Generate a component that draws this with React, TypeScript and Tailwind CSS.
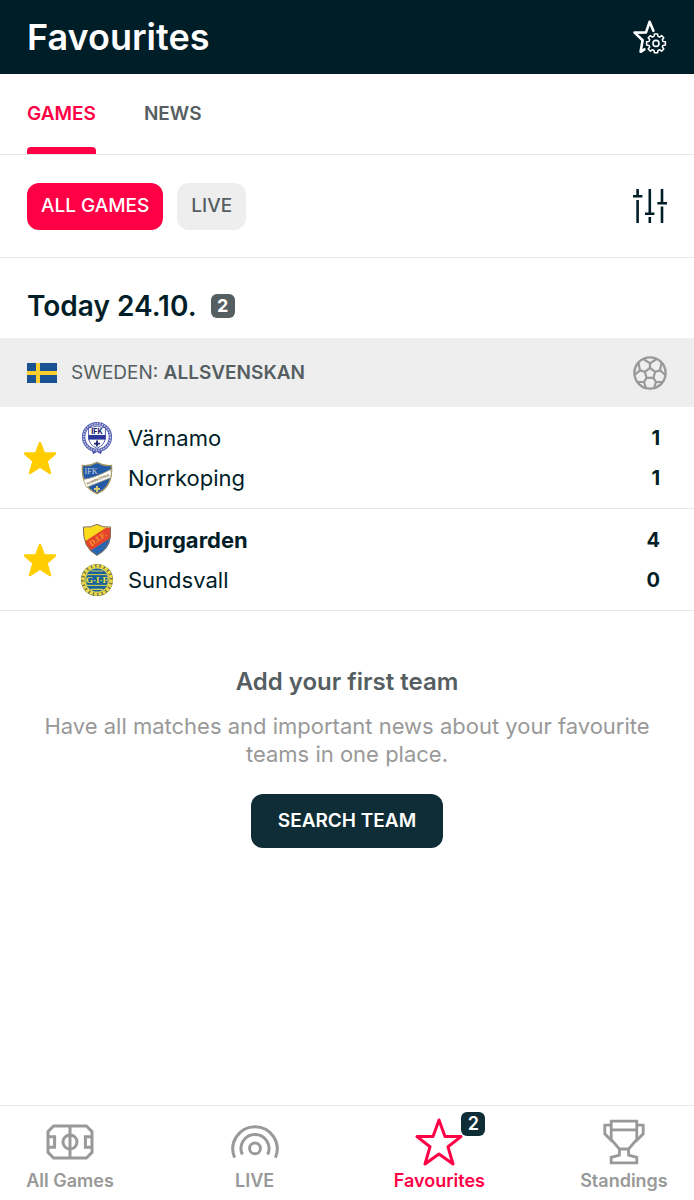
import React, { useState } from 'react';

interface ITeam {
    name: string;
    score: number;
    crest: React.ReactNode;
    winner?: boolean;
}

interface IMatch {
    id: number;
    teams: ITeam[];
}

const STAR_POINTS = '17,2 21,12.5 32,12.5 23.5,20 27,32 17,25.4 7,32 10.5,20 2,12.5 13,12.5';

const FavouriteSettingsIcon = () => (
    <svg width="34" height="34" viewBox="0 0 34 34" fill="none" stroke="currentColor" strokeLinejoin="round" strokeLinecap="round">
        <path d="M20.4 10.8 L16.6 1.8 L13 12.4 L1.6 12.6 L9.6 20.2 L7.6 31.8 L11.4 29.4" strokeWidth="2.6" />
        <circle cx="23" cy="23.4" r="3" strokeWidth="1.6" />
        <path
            d="M21.4 14 H24.6 L25 16.4 L26.6 17.1 L28.6 15.6 L30.8 17.8 L29.3 19.8 L30 21.4 L32.4 21.8 V25 L30 25.4 L29.3 27 L30.8 29 L28.6 31.2 L26.6 29.7 L25 30.4 L24.6 32.8 H21.4 L21 30.4 L19.4 29.7 L17.4 31.2 L15.2 29 L16.7 27 L16 25.4 L13.6 25 V21.8 L16 21.4 L16.7 19.8 L15.2 17.8 L17.4 15.6 L19.4 17.1 L21 16.4 Z"
            strokeWidth="1.5"
        />
    </svg>
);

const FilterIcon = () => (
    <svg width="34" height="34" viewBox="0 0 34 34" stroke="currentColor" strokeWidth="2.6">
        <path d="M4.6 0 V7.3 M0 7.3 H9.4 M4.6 11 V34" />
        <path d="M16.8 0 V24.7 M12 24.7 H21.4 M16.8 28 V34" />
        <path d="M29 0 V14.3 M24.4 14.3 H34 M29 17.6 V34" />
    </svg>
);

const BallIcon = () => (
    <svg width="34" height="34" viewBox="0 0 34 34" fill="none" stroke="currentColor" strokeWidth="2.2" strokeLinejoin="round">
        <circle cx="17" cy="17" r="15.6" strokeWidth="2.4" />
        <path d="M17 12 L22.2 15.8 L20.4 21.8 H13.6 L11.8 15.8 Z" />
        <path d="M17 12 V7.4 M22.2 15.8 L27 14.4 M20.4 21.8 L23 26 M13.6 21.8 L11 26 M11.8 15.8 L7 14.4" />
        <path d="M10.4 3 L17 7.4 L23.6 3 M28.6 6.6 L27 14.4 L32.4 19 M29.6 26 H23 L21 32 M4.4 26 H11 L13 32 M5.4 6.6 L7 14.4 L1.6 19" />
    </svg>
);

const SwedenFlag = () => (
    <svg width="30" height="20" viewBox="0 0 30 20">
        <rect width="30" height="20" fill="#1a5293" />
        <path d="M11 0 V20 M0 10 H30" stroke="#fccf2e" strokeWidth="4" />
    </svg>
);

const VarnamoCrest = () => (
    <svg width="34" height="34" viewBox="0 0 34 34">
        <path d="M12 29 L13 33 L17 31 L21 33 L22 29 Z" fill="#3b45a0" />
        <circle cx="17" cy="16" r="13.4" fill="#fff" stroke="#5660b2" strokeWidth="3.4" />
        <circle cx="17" cy="16" r="13.4" fill="none" stroke="#c9cdea" strokeWidth="1.6" strokeDasharray="1.4 1.2" />
        <path d="M8.6 6.6 Q13 6.6 17 5 Q21 6.6 25.4 6.6 V17 Q25 23.6 17 27.4 Q9 23.6 8.6 17 Z" fill="#fff" stroke="#2c3899" strokeWidth="0.8" />
        <rect x="8.4" y="14" width="17.2" height="4.6" fill="#2c3899" />
        <text x="17" y="12.8" textAnchor="middle" fontSize="7" fontWeight="800" fontFamily="Inter, sans-serif" fill="#1c2471">IFK</text>
        <path d="M17 19.6 V25.6 M14 22.6 H20" stroke="#1c2471" strokeWidth="1.8" />
    </svg>
);

const NorrkopingCrest = () => (
    <svg width="34" height="34" viewBox="0 0 34 34">
        <path d="M2.5 4.5 Q10 5.4 17 1.4 Q24 5.4 31.5 4.5 Q33 26 17 32.6 Q1 26 2.5 4.5 Z" fill="#2459a6" stroke="#a29362" strokeWidth="1.4" />
        <path d="M3.6 18.4 Q13 17.6 31 8.4 Q31.6 12 30.6 16.6 Q21 20.6 6.6 26.2 Q4.4 22.4 3.6 18.4 Z" fill="#fff" stroke="#b5a97c" strokeWidth="0.8" />
        <text x="11" y="13.4" textAnchor="middle" fontSize="8" fontFamily="Liberation Serif, serif" fill="#ccd3dc">IFK</text>
        <text x="18" y="19.6" textAnchor="middle" fontSize="3.6" fontWeight="700" fontFamily="Inter, sans-serif" fill="#8e8254" transform="rotate(-22 18 18)">NORRKÖPING</text>
        <path d="M17 25 V31 M14 28 H20" stroke="#d8c973" strokeWidth="2" />
    </svg>
);

const DjurgardenCrest = () => (
    <svg width="34" height="34" viewBox="0 0 34 34">
        <path d="M3.4 4 Q10.4 5 17 1.4 Q23.6 5 30.6 4 Q31.6 25 17 32.4 Q2.4 25 3.4 4 Z" fill="#fbdc1b" />
        <path d="M30.8 14 Q29.8 26 17 32.4 Q13.4 30.4 10.4 27.2 Z" fill="#2866b1" />
        <path d="M30.4 5 Q31.2 10 30.6 15 L10.6 27.4 Q6.4 23.6 4.8 18.6 L26 4.8 Z" fill="#e5432c" />
        <text x="18" y="18.4" textAnchor="middle" fontSize="8" fontWeight="700" fontFamily="Liberation Serif, serif" fill="#efa02c" transform="rotate(-35 18 16)">D.I.F.</text>
        <path d="M3.4 4 Q10.4 5 17 1.4 Q23.6 5 30.6 4 Q31.6 25 17 32.4 Q2.4 25 3.4 4 Z" fill="none" stroke="#806c5c" strokeWidth="1" />
    </svg>
);

const SundsvallCrest = () => (
    <svg width="34" height="34" viewBox="0 0 34 34">
        <circle cx="17" cy="17" r="14.4" fill="#e9dc60" stroke="#6f7849" strokeWidth="3.4" />
        <circle cx="17" cy="17" r="14.2" fill="none" stroke="#efd946" strokeWidth="3.2" strokeDasharray="3 1.4" />
        <circle cx="17" cy="17" r="11.6" fill="#19639b" />
        <path d="M11 8 H23 M11 26.4 H23" stroke="#d8d45c" strokeWidth="1.2" />
        <rect x="6" y="11.6" width="22" height="10.8" rx="2" fill="#19639b" stroke="#ddd04f" strokeWidth="1" />
        <text x="17" y="20.4" textAnchor="middle" fontSize="9" fontWeight="700" fontFamily="Liberation Serif, serif" fill="#f2e03d">G·I·F</text>
    </svg>
);

const PitchIcon = () => (
    <svg width="48" height="36" viewBox="0 0 48 36" fill="none" stroke="currentColor" strokeWidth="3">
        <path d="M7.6 2 H40.4 L46 7.6 V28.4 L40.4 34 H7.6 L2 28.4 V7.6 Z M24 2 V34" strokeLinejoin="round" />
        <circle cx="24" cy="18" r="7" />
        <path d="M2 12.8 H8.6 V23.2 H2 M46 12.8 H39.4 V23.2 H46" />
    </svg>
);

const LiveIcon = () => (
    <svg width="48" height="36" viewBox="0 0 48 36" fill="none" stroke="currentColor" strokeWidth="3">
        <circle cx="24" cy="24.4" r="5.4" />
        <path d="M11.4 30.5 A14 14 0 1 1 36.6 30.5" />
        <path d="M3.6 33.6 A22.2 22.2 0 1 1 44.4 33.6" />
    </svg>
);

const StarIcon = () => (
    <svg width="48" height="48" viewBox="0 0 48 48" fill="none" stroke="currentColor" strokeWidth="3" strokeLinejoin="round">
        <path d="M24 2 L30 18.6 H46 L33 28.8 L38 46 L24 36 L10 46 L15 28.8 L2 18.6 H18 Z" />
    </svg>
);

const TrophyIcon = () => (
    <svg width="42" height="46" viewBox="0 0 42 46" fill="none" stroke="currentColor" strokeWidth="2.8">
        <path d="M8.2 2.2 H33.8 V20.4 L25.6 30 H16.4 L8.2 20.4 Z M8.2 10.8 H33.8" />
        <path d="M8.2 6.2 H1.8 V14.8 L9.4 22.4 M33.8 6.2 H40.2 V14.8 L32.6 22.4" />
        <path d="M16.4 30 V36.2 L8.2 38.4 V43.8 H33.8 V38.4 L25.6 36.2 V30" />
    </svg>
);

const matches: IMatch[] = [
    {
        id: 1,
        teams: [
            { name: 'Värnamo', score: 1, crest: <VarnamoCrest /> },
            { name: 'Norrkoping', score: 1, crest: <NorrkopingCrest /> },
        ],
    },
    {
        id: 2,
        teams: [
            { name: 'Djurgarden', score: 4, crest: <DjurgardenCrest />, winner: true },
            { name: 'Sundsvall', score: 0, crest: <SundsvallCrest /> },
        ],
    },
];

const navItems = [
    { label: 'All Games', icon: <PitchIcon /> },
    { label: 'LIVE', icon: <LiveIcon /> },
    { label: 'Favourites', icon: <StarIcon />, badge: 2 },
    { label: 'Standings', icon: <TrophyIcon /> },
];

const MatchRow = ({ match }: { match: IMatch }) => {
    const [starred, setStarred] = useState(true);

    return (
        <li className="flex items-center border-b border-[#e6e6e6] pt-[11px] pb-2.5 pr-[34px] pl-[23px]">
            <button
                type="button"
                aria-label="Toggle favourite"
                aria-pressed={starred}
                onClick={() => setStarred(!starred)}
                className="mr-[23px] shrink-0"
            >
                <svg width="34" height="34" viewBox="0 0 34 34" strokeWidth="2.4" strokeLinejoin="round" stroke="#ffcd00" fill={starred ? '#ffcd00' : 'none'}>
                    <polygon points={STAR_POINTS} />
                </svg>
            </button>
            <div className="min-w-0 flex-1">
                {match.teams.map((team) => (
                    <div key={team.name} className={`flex h-10 items-center text-[22px] ${team.winner ? 'font-bold' : ''}`}>
                        {team.crest}
                        <span className="ml-3.5 flex-1 truncate">{team.name}</span>
                        <span className="text-xl font-bold">{team.score}</span>
                    </div>
                ))}
            </div>
        </li>
    );
};

const App = () => {
    const [tab, setTab] = useState('GAMES');
    const [filter, setFilter] = useState('ALL GAMES');

    return (
        <div className="flex min-h-screen flex-col bg-white font-['Inter',sans-serif] text-[#001e28]">
            <header className="flex h-[74px] items-center justify-between bg-[#001e28] px-[27px] text-white">
                <h1 className="text-4xl font-semibold">Favourites</h1>
                <button type="button" aria-label="Favourite settings">
                    <FavouriteSettingsIcon />
                </button>
            </header>

            <div className="flex h-[81px] gap-12 border-b border-[#e6e6e6] px-[27px] text-[19px] font-semibold">
                {['GAMES', 'NEWS'].map((name) => (
                    <button
                        key={name}
                        type="button"
                        onClick={() => setTab(name)}
                        className={`flex flex-col items-center justify-between pt-[26px] ${tab === name ? 'text-[#ff0046]' : 'text-[#555e61]'}`}
                    >
                        {name}
                        {tab === name && <span className="h-[7px] w-full rounded-t bg-[#ff0046]" />}
                    </button>
                ))}
            </div>

            <div className="flex h-[103px] items-center border-b border-[#e6e6e6] px-[27px] text-[19px]">
                <div className="flex flex-1 gap-3.5">
                    {['ALL GAMES', 'LIVE'].map((name) => (
                        <button
                            key={name}
                            type="button"
                            onClick={() => setFilter(name)}
                            className={`h-[47px] rounded-xl px-3.5 font-medium ${filter === name ? 'bg-[#ff0046] text-white' : 'bg-[#eeeeee] text-[#555e61]'}`}
                        >
                            {name}
                        </button>
                    ))}
                </div>
                <button type="button" aria-label="Filter games">
                    <FilterIcon />
                </button>
            </div>

            <main className="flex-1">
                <div className="flex h-20 items-center gap-3.5 px-[27px] pt-4">
                    <h2 className="text-[28px] font-semibold">Today 24.10.</h2>
                    <span className="flex size-6 items-center justify-center rounded-md bg-[#555e61] text-lg font-bold text-white">2</span>
                </div>

                <div className="flex h-[69px] items-center bg-[#eeeeee] px-[27px] text-[#555e61]">
                    <SwedenFlag />
                    <h3 className="ml-3.5 flex-1 pt-0.5 text-[19px]">
                        SWEDEN: <span className="font-semibold">ALLSVENSKAN</span>
                    </h3>
                    <span className="text-[#999999]">
                        <BallIcon />
                    </span>
                </div>

                <ul>
                    {matches.map((match) => (
                        <MatchRow key={match.id} match={match} />
                    ))}
                </ul>

                <section className="flex flex-col items-center px-10 pt-[55px] pb-6 text-center">
                    <h2 className="text-2xl font-semibold text-[#555e61]">Add your first team</h2>
                    <p className="mt-3.5 text-[22px] leading-7 text-[#999999]">
                        Have all matches and important news about your favourite teams in one place.
                    </p>
                    <button type="button" className="mt-[26px] h-[54px] rounded-xl bg-[#0f2d37] px-[27px] text-[19px] font-semibold text-white">
                        SEARCH TEAM
                    </button>
                </section>
            </main>

            <nav className="flex h-[95px] justify-between border-t border-[#e6e6e6] px-6">
                {navItems.map((item) => (
                    <a
                        key={item.label}
                        href="#"
                        className={`flex w-[92px] flex-col items-center text-lg font-semibold whitespace-nowrap ${item.badge ? 'text-[#ff0046]' : 'text-[#999999]'}`}
                    >
                        <span className="relative flex h-[61px] items-center pt-2.5">
                            {item.icon}
                            {item.badge && (
                                <span className="absolute top-1.5 -right-[22px] flex size-6 items-center justify-center rounded-md bg-[#0f2d37] text-white">
                                    {item.badge}
                                </span>
                            )}
                        </span>
                        {item.label}
                    </a>
                ))}
            </nav>
        </div>
    );
};

export default App;
